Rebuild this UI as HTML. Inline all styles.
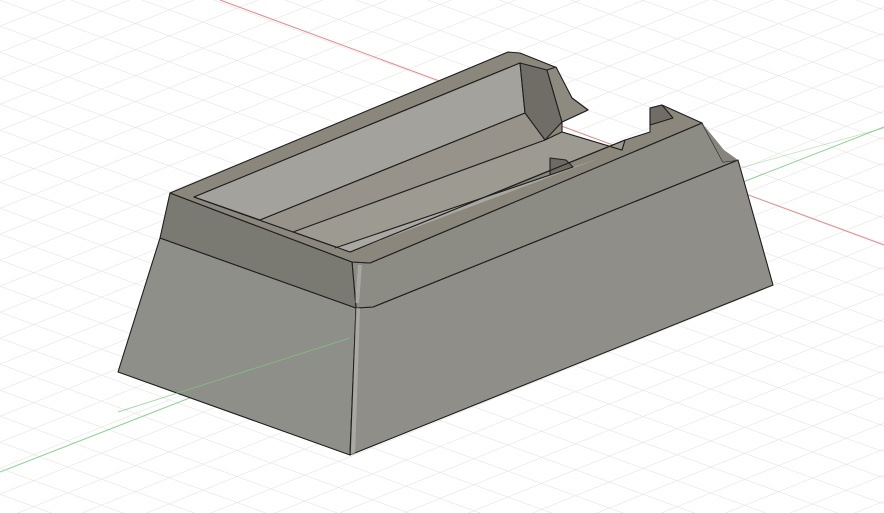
<!DOCTYPE html>
<html><head><meta charset="utf-8"><style>
html,body{margin:0;padding:0;background:#fff;width:884px;height:513px;overflow:hidden}
</style></head><body>
<svg width="884" height="513" viewBox="0 0 884 513" xmlns="http://www.w3.org/2000/svg">
<defs>
<pattern id="g1" width="884" height="26" patternUnits="userSpaceOnUse" patternTransform="skewY(20)">
<line x1="0" y1="0" x2="884" y2="0" stroke="#dedede" stroke-width="1"/>
</pattern>
<pattern id="g2" width="884" height="26" patternUnits="userSpaceOnUse" patternTransform="skewY(-22)">
<line x1="0" y1="0" x2="884" y2="0" stroke="#dedede" stroke-width="1"/>
</pattern>
</defs>
<rect width="884" height="513" fill="#fff"/>
<rect width="884" height="513" fill="url(#g1)"/>
<rect width="884" height="513" fill="url(#g2)"/>
<line x1="220" y1="0" x2="884" y2="245" stroke="#e58a8a" stroke-width="1"/>
<line x1="0" y1="472" x2="884" y2="127" stroke="#8fd08f" stroke-width="1"/>

<g stroke="#1e1e1e" stroke-width="1.1" stroke-linejoin="round">
<polygon points="160,238 356,308 350,455 118,372" fill="#8e8f88"/>
<polygon points="356,308 373,307 738,160 773,285 350,455" fill="#8f8e88"/>
<polygon points="352,262 370,263 702,123 723,162 738,160 373,307 356,308" fill="#8c8b84"/>
<polygon points="702,123 723,162 738,160 724,150" fill="#86847c" stroke="none"/>
<polygon points="170,193 352,262 356,308 160,238" fill="#7b7a72"/>
<polygon points="170,193 508,52 520,53 555,67 572,98 588,110 562,122 562,132 622,150 625,140 650,132 650,108 662,105 702,123 370,263 352,262" fill="#8b877c"/>
<polygon points="194,197 520,63 545,140 562,132 622,150 625,140 350,252" fill="#9d9a91"/>
<polygon points="194,197 520,63 525,113 260,220" fill="#a4a29c"/>
<polygon points="260,220 525,113 545,140 293,232" fill="#97928a" stroke="none"/>
<line x1="260" y1="220" x2="525" y2="113"/>
<line x1="293" y1="232" x2="545" y2="140"/>
<polygon points="335,248 550,175 600,158 350,252" fill="#aaa8a2" stroke="none"/>
<line x1="335" y1="248" x2="550" y2="175"/>
<polygon points="550,158 550,175 573,167 566,160" fill="#6c6a63"/>
<line x1="350" y1="252" x2="625" y2="140"/>
<polygon points="520,63 547,70 562,122 545,140 525,113" fill="#6f6d66"/>
<polygon points="547,70 556,67 572,98 588,110 562,122" fill="#8d8a80"/>
<polygon points="650,108 662,105 673,118 650,125" fill="#6f6d66"/>
<line x1="194" y1="197" x2="350" y2="252"/>
</g>
<line x1="118" y1="412" x2="350" y2="338" stroke="#7fc77f" stroke-width="1" opacity=".7"/>
<line x1="740" y1="168" x2="884" y2="128" stroke="#7fc77f" stroke-width="1" opacity=".4"/>
<line x1="353" y1="455" x2="358" y2="308" stroke="#c9c8c3" stroke-width="4" opacity=".45"/>
<line x1="357" y1="303" x2="360" y2="265" stroke="#c9c8c3" stroke-width="4" opacity=".45"/>
</svg>
</body></html>
